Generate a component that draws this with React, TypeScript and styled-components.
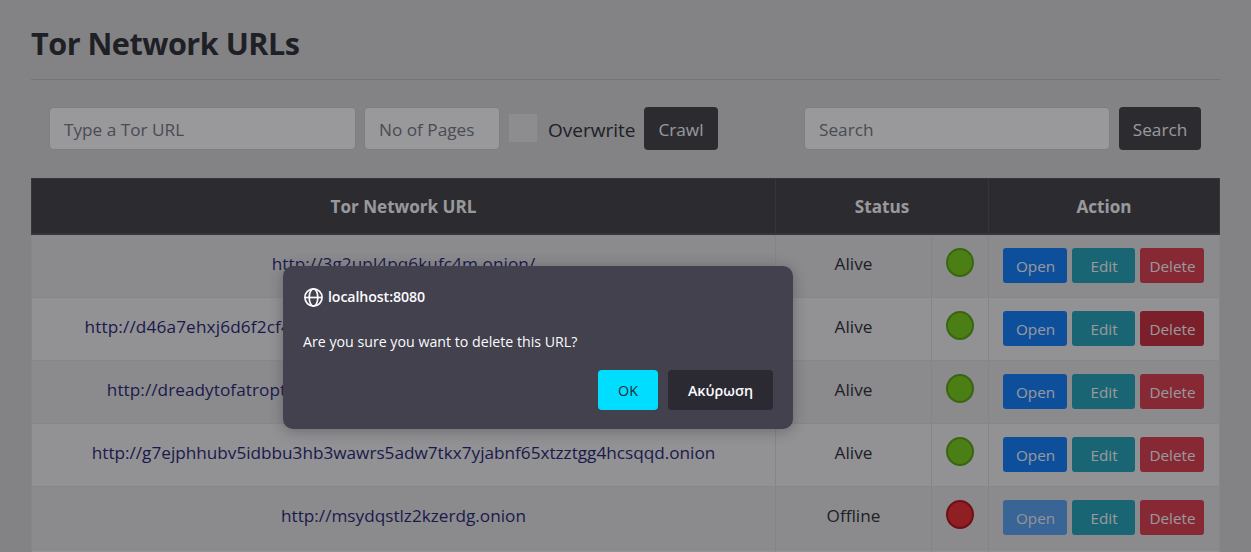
import React from "react";
import styled, { createGlobalStyle } from "styled-components";

const GlobalStyle = createGlobalStyle`
  *, *::before, *::after { box-sizing: border-box; }
  html, body { margin: 0; height: 552px; overflow: hidden; }
  body {
    background: #d7d7d7;
    color: #212529;
    font-family: "Open Sans", "Noto Sans", sans-serif;
  }
`;

const Page = styled.main`
  height: 552px;
  padding: 20px 31px 0;
  overflow: hidden;
`;

const Title = styled.h2`
  margin: 0;
  height: 59px;
  font-size: 30.6px;
  line-height: 47px;
  font-weight: 700;
  letter-spacing: -0.5px;
`;

const Divider = styled.hr`
  margin: 0;
  border: 0;
  height: 1px;
  background: rgba(0, 0, 0, 0.12);
`;

const Toolbar = styled.div`
  display: flex;
  justify-content: space-between;
  padding: 27px 19px 28px;
`;

const Form = styled.form`
  display: flex;
  align-items: center;
  height: 43px;
`;

const Field = styled.input<{ $width: number }>`
  width: ${(p) => p.$width}px;
  height: 41px;
  margin-right: 10px;
  padding: 3px 13px 2px 14px;
  border: 0;
  border-radius: 4px;
  background: #fff;
  font: 400 17.2px "Open Sans", sans-serif;
  box-shadow: 0 0 0 1px #d0d1d2;
  &::placeholder {
    color: #6c757d;
    opacity: 1;
  }
`;

const CheckBox = styled.input`
  appearance: none;
  width: 28px;
  height: 28px;
  margin: 0 11px 2px 0;
  background: #e9e9ea;
`;

const CheckLabel = styled.label`
  width: 96px;
  padding-top: 2px;
  font-size: 19px;
  line-height: 30px;
  white-space: nowrap;
`;

const DarkButton = styled.button<{ $width: number }>`
  width: ${(p) => p.$width}px;
  height: 43px;
  padding: 2px 0 0;
  border: 0;
  border-radius: 4px;
  background: #38393d;
  color: #fff;
  font: 400 17.2px "Open Sans", sans-serif;
`;

const Table = styled.section`
  width: 1189px;
`;

const HeadRow = styled.div`
  display: grid;
  grid-template-columns: 743px 213px 1fr;
  height: 57px;
  background: #38393d;
  border: 1px solid #484d54;
  border-bottom-width: 2px;
  color: #fff;
`;

const HeadCell = styled.div`
  font-size: 17.1px;
  font-weight: 700;
  line-height: 56px;
  text-align: center;
  & + & {
    border-left: 1px solid #484d54;
  }
`;

const BodyRow = styled.div<{ $striped: boolean }>`
  display: grid;
  grid-template-columns: 743px 156px 57px 1fr;
  height: 63px;
  border: 1px solid #dee0e2;
  border-top: 0;
  background: ${(p) => (p.$striped ? "#e6e6e6" : "#f2f2f2")};
`;

const Cell = styled.div`
  padding-top: 13px;
  font-size: 17.2px;
  line-height: 32px;
  text-align: center;
  white-space: nowrap;
  & + & {
    border-left: 1px solid #dadcde;
  }
`;

const Link = styled.a<{ $tracking: number }>`
  color: #191970;
  letter-spacing: ${(p) => p.$tracking}px;
`;

const Dot = styled.span<{ $alive: boolean }>`
  display: block;
  width: 28px;
  height: 29px;
  margin: 0 auto;
  border: 2px solid ${(p) => (p.$alive ? "#51a303" : "#b30709")};
  border-radius: 50%;
  background: ${(p) => (p.$alive ? "#72d00c" : "#ed2424")};
`;

const Actions = styled(Cell)`
  display: flex;
  gap: 5px;
  padding-left: 14px;
`;

const ActionButton = styled.button<{ $color: string; $width: number }>`
  width: ${(p) => p.$width}px;
  height: 35px;
  padding: 0 0 0 1px;
  border: 0;
  border-radius: 3px;
  background: ${(p) => p.$color};
  color: #fff;
  font: 400 15.3px "Open Sans", sans-serif;
  &:disabled {
    opacity: 0.65;
  }
`;

const Backdrop = styled.div`
  position: absolute;
  inset: 0;
  height: 552px;
  background: rgba(28, 27, 34, 0.45);
`;

const Dialog = styled.div`
  position: absolute;
  left: 283px;
  top: 266px;
  width: 510px;
  height: 163px;
  padding: 20px 20px 18px;
  display: flex;
  flex-direction: column;
  border-radius: 10px;
  background: #42414d;
  color: #fbfbfe;
  box-shadow: 0 2px 14px rgba(28, 27, 34, 0.32);
  font-size: 14.2px;
`;

const Origin = styled.div`
  display: flex;
  align-items: center;
  gap: 4px;
  height: 21px;
  padding-left: 1px;
  font-weight: 600;
  letter-spacing: -0.1px;
`;

const Message = styled.p`
  margin: 24px 0 0;
  line-height: 22px;
`;

const DialogButtons = styled.div`
  display: flex;
  flex-shrink: 0;
  justify-content: flex-end;
  gap: 10px;
  margin-top: 17px;
`;

const DialogButton = styled.button<{ $primary?: boolean }>`
  width: ${(p) => (p.$primary ? 60 : 105)}px;
  height: 40px;
  padding: 1px 0 0;
  border: 0;
  border-radius: 4px;
  background: ${(p) => (p.$primary ? "#00ddff" : "#2b2a33")};
  color: ${(p) => (p.$primary ? "#2b2a33" : "#fbfbfe")};
  font: ${(p) => (p.$primary ? 400 : 600)} 14.3px "Open Sans", sans-serif;
`;

const Globe = () => (
  <svg width="20" height="20" viewBox="0 0 20 20" fill="none" stroke="currentColor" strokeWidth="1.7">
    <circle cx="9.5" cy="10.5" r="8.6" />
    <ellipse cx="9.5" cy="10.5" rx="4.3" ry="8.6" />
    <path d="M1 10.5h17" />
  </svg>
);

type Entry = { url: string; alive: boolean; tracking: number; focused?: boolean };

const entries: Entry[] = [
  { url: "http://3g2upl4pq6kufc4m.onion/", alive: true, tracking: 0.06 },
  { url: "http://d46a7ehxj6d6f2cf4hi3b424uzywno24c7qtnvdvwsah5qpogewoeqd.onion", alive: true, tracking: 0.14, focused: true },
  { url: "http://dreadytofatroptsdj6io7l3xptbet6onoyno2yv7jicoxknyazubrad.onion", alive: true, tracking: 0.05 },
  { url: "http://g7ejphhubv5idbbu3hb3wawrs5adw7tkx7yjabnf65xtzztgg4hcsqqd.onion", alive: true, tracking: -0.01 },
  { url: "http://msydqstlz2kzerdg.onion", alive: false, tracking: 0 },
];

export default function App() {
  return (
    <>
      <GlobalStyle />
      <Page>
        <Title>Tor Network URLs</Title>
        <Divider />
        <Toolbar>
          <Form>
            <Field $width={305} placeholder="Type a Tor URL" />
            <Field $width={134} placeholder="No of Pages" />
            <CheckBox type="checkbox" id="overwrite" />
            <CheckLabel htmlFor="overwrite">Overwrite</CheckLabel>
            <DarkButton type="button" $width={74}>Crawl</DarkButton>
          </Form>
          <Form>
            <Field $width={304} placeholder="Search" />
            <DarkButton type="button" $width={82}>Search</DarkButton>
          </Form>
        </Toolbar>
        <Table>
          <HeadRow>
            <HeadCell>Tor Network URL</HeadCell>
            <HeadCell>Status</HeadCell>
            <HeadCell>Action</HeadCell>
          </HeadRow>
          {entries.map((e, i) => (
            <BodyRow key={e.url} $striped={i % 2 === 0}>
              <Cell>
                <Link $tracking={e.tracking}>{e.url}</Link>
              </Cell>
              <Cell>{e.alive ? "Alive" : "Offline"}</Cell>
              <Cell>
                <Dot $alive={e.alive} />
              </Cell>
              <Actions>
                <ActionButton $color="#007bff" $width={64} disabled={!e.alive}>Open</ActionButton>
                <ActionButton $color="#17a2b8" $width={63}>Edit</ActionButton>
                <ActionButton $color={e.focused ? "#c82333" : "#dc3545"} $width={64}>Delete</ActionButton>
              </Actions>
            </BodyRow>
          ))}
          <BodyRow $striped={false}>
            <Cell />
            <Cell />
            <Cell />
            <Cell />
          </BodyRow>
        </Table>
      </Page>
      <Backdrop />
      <Dialog role="dialog">
        <Origin>
          <Globe />
          localhost:8080
        </Origin>
        <Message>Are you sure you want to delete this URL?</Message>
        <DialogButtons>
          <DialogButton $primary>OK</DialogButton>
          <DialogButton>Ακύρωση</DialogButton>
        </DialogButtons>
      </Dialog>
    </>
  );
}
